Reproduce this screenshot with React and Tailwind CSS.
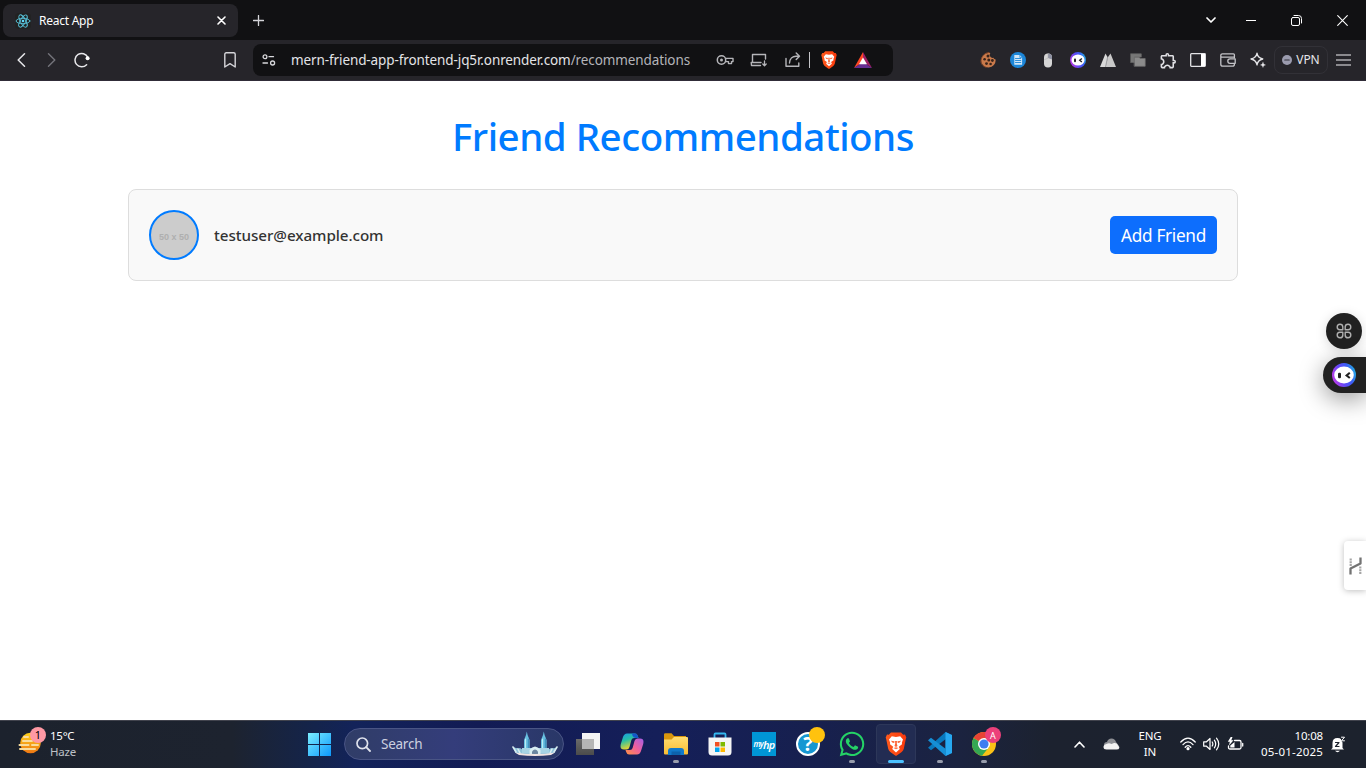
import React from "react";
import { MdOutlineExtension } from "react-icons/md";
import { FaWhatsapp } from "react-icons/fa";

const UI = "font-['Noto_Sans','Open_Sans',sans-serif]";

function Cell({ className = "w-[30px] h-[30px]", children }) {
  return <span className={`flex shrink-0 items-center justify-center ${className}`}>{children}</span>;
}

function Svg({ w = 16, h, vb, className = "", children }) {
  const hh = h ?? w;
  return (
    <svg width={w} height={hh} viewBox={vb ?? `0 0 ${w} ${hh}`} className={`shrink-0 ${className}`} fill="none" strokeLinecap="round" strokeLinejoin="round">
      {children}
    </svg>
  );
}

function ReactLogo() {
  return (
    <Svg w={16} className="rounded-sm bg-[#222222]">
      <g stroke="#58c4dc" strokeWidth="0.9">
        <ellipse cx="8" cy="8" rx="6.9" ry="2.7" />
        <ellipse cx="8" cy="8" rx="6.9" ry="2.7" transform="rotate(60 8 8)" />
        <ellipse cx="8" cy="8" rx="6.9" ry="2.7" transform="rotate(120 8 8)" />
      </g>
      <circle cx="8" cy="8" r="1.3" fill="#61dafb" />
    </Svg>
  );
}

function Brave({ size, id }) {
  return (
    <svg width={size} height={size} viewBox="0 0 24 24" className="shrink-0">
      <defs>
        <linearGradient id={id} x1="0" y1="0" x2="1" y2="0">
          <stop stopColor="#ff5a1c" />
          <stop offset="1" stopColor="#f9390d" />
        </linearGradient>
      </defs>
      <path d="M7 0.4H17L19.2 2.8L21 2.6L22.3 5.4L21.7 7.600L19.800 16.800Q19.300 18.800 17.700 20L12.800 23.500Q12 24 11.200 23.500L6.300 20Q4.700 18.800 4.200 16.800L2.300 7.600L1.700 5.400L3 2.600L4.800 2.800Z" fill={`url(#${id})`} />
      <path d="M7.800 4.200L12 4.900L16.200 4.200L19 7.600L17.900 10.500L18 12.300L14.800 14.700L15.800 17L12 20.400L8.200 17L9.200 14.700L6 12.300L6.100 10.500L5 7.600Z" fill="#fff" />
      <path d="M6.900 8.800L10.600 9.300L10.200 10.900L8.600 10.700ZM17.100 8.800L13.400 9.300L13.800 10.900L15.400 10.700ZM11.200 11.500L10.500 14L12 14.900L13.500 14L12.800 11.500L13 9H11Z" fill="#fb4a14" opacity=".85" />
      <path d="M9.400 16L12 15.300L14.600 16L12 17.300Z" fill="#fb4a14" opacity=".8" />
    </svg>
  );
}

function Robot({ size, id }) {
  return (
    <svg width={size} height={size} viewBox="0 0 24 24" className="shrink-0">
      <defs>
        <linearGradient id={id} x1="0.1" y1="0.7" x2="1" y2="0.4">
          <stop offset="0" stopColor="#b03ce8" />
          <stop offset="0.35" stopColor="#6248f5" />
          <stop offset="0.7" stopColor="#3c5cf5" />
          <stop offset="1" stopColor="#22a9e2" />
        </linearGradient>
      </defs>
      <circle cx="12" cy="12" r="12" fill={`url(#${id})`} />
      <ellipse cx="12" cy="12" rx="9.8" ry="8.4" fill="#fff" />
      <rect x="6" y="9.8" width="3" height="5.4" rx="1.2" fill="#222" />
      <path d="M17.800 9.800L14.600 12.500L17.800 15" fill="none" stroke="#222" strokeWidth="2.1" />
    </svg>
  );
}

function TabStrip() {
  return (
    <div className="flex h-10 shrink-0 items-stretch bg-[#111113] text-white">
      <div className="my-1 ml-[3px] flex h-[33px] w-[235px] items-center rounded-lg bg-[#26252a] pl-3">
        <ReactLogo />
        <span className="ml-2 flex-1 text-[12px] leading-4 tracking-[-0.25px]">React App</span>
        <Svg w={9} className="mr-3" vb="0 0 9 9">
          <path d="M1 1l7 7M8 1l-7 7" stroke="#fff" strokeWidth="1.6" />
        </Svg>
      </div>
      <Cell className="ml-[5px] h-10 w-[31px]">
        <Svg w={11}><path d="M5.5 .5v10M.5 5.5h10" stroke="#d4d4d8" strokeWidth="1.3" /></Svg>
      </Cell>
      <div className="flex-1" />
      <Cell className="h-10 w-[34px]">
        <Svg w={10} h={6}><path d="M1 1l4 4 4-4" stroke="#fff" strokeWidth="1.7" /></Svg>
      </Cell>
      <Cell className="h-10 w-[46px]">
        <Svg w={10} h={1}><path d="M0 0h10v1H0z" fill="#fff" /></Svg>
      </Cell>
      <Cell className="h-10 w-[46px] pr-px">
        <Svg w={11}>
          <rect x=".5" y="2.5" width="8" height="8" rx="1.5" stroke="#fff" />
          <path d="M3 .5h4.5a3 3 0 013 3V8" stroke="#fff" />
        </Svg>
      </Cell>
      <Cell className="h-10 w-[46px] pr-px">
        <Svg w={11}><path d="M.7 .7l9.6 9.6M10.3 .7L.7 10.3" stroke="#fff" strokeWidth="1.1" /></Svg>
      </Cell>
    </div>
  );
}

function AddressBar() {
  return (
    <div className="ml-2 flex h-8 w-[640px] shrink-0 items-center rounded-lg bg-[#111113] text-[#e4e4e7]">
      <Cell className="ml-[6px] h-5 w-5">
        <Svg w={14} h={12}>
          <circle cx="3" cy="2.7" r="1.9" stroke="#d8d8dc" strokeWidth="1.3" />
          <path d="M7 2.7h4.500M1 9h4.500" stroke="#d8d8dc" strokeWidth="1.3" />
          <circle cx="10.6" cy="9" r="2" stroke="#d8d8dc" strokeWidth="1.3" />
        </Svg>
      </Cell>
      <span className="ml-3 w-[419px] whitespace-nowrap text-[13.5px] leading-5 tracking-[-0.1px]">
        mern-friend-app-frontend-jq5r.onrender.com<span className="text-[#b4b4b9]">/recommendations</span>
      </span>
      <Cell className="ml-[5px] h-8 w-[20px]">
        <Svg w={18} h={12}>
          <circle cx="5.500" cy="6" r="4.200" stroke="#b5b5b9" strokeWidth="1.500" />
          <circle cx="5.500" cy="6" r="1.500" fill="#b5b5b9" />
          <path d="M9.700 4.400h7.300v3.200h-1.500v2h-3v-2H9.700" stroke="#b5b5b9" strokeWidth="1.400" />
        </Svg>
      </Cell>
      <Cell className="ml-[14px] h-8 w-[20px]">
        <Svg w={18} h={14}>
          <path d="M15.500 6V1.500H2.500V9.500M11 9.500H1.200L1.500 12.500H10.500" stroke="#b5b5b9" strokeWidth="1.400" />
          <path d="M14.500 8v4.600M12.800 11l1.700 1.800 1.700-1.800" stroke="#b5b5b9" strokeWidth="1.300" />
        </Svg>
      </Cell>
      <Cell className="ml-[14px] h-8 w-[20px]">
        <Svg w={16} h={16}>
          <path d="M1 6.500v7.800h12.800V11" stroke="#b5b5b9" strokeWidth="1.400" />
          <path d="M4.500 11c.2-4.200 3-6.800 6.500-6.800h3.500M11.200 1l3.300 3.200-3.300 3.400" stroke="#b5b5b9" strokeWidth="1.400" />
        </Svg>
      </Cell>
      <span className="ml-[6px] h-4 w-px bg-[#c5c5c9]" />
      <Cell className="ml-[9px] h-8 w-[20px]"><Brave size={18} id="braveBar" /></Cell>
      <Cell className="ml-[14px] h-8 w-[20px]">
        <Svg w={18} h={16}>
          <path d="M9 0L0 16L9 10Z" fill="#ff4724" />
          <path d="M9 0L18 16L9 10Z" fill="#9e1f63" />
          <path d="M0 16H18L9 10Z" fill="#662d91" />
          <path d="M9 5.4L13 12.3H5Z" fill="#fff" />
        </Svg>
      </Cell>
    </div>
  );
}

function Toolbar() {
  return (
    <div className="flex h-[41px] shrink-0 items-center border-b border-[#302c38] bg-[#26252a] px-[7px]">
      <Cell className="h-[30px] w-[30px] pr-px"><Svg w={9} h={14}><path d="M7.500 .8L1.200 7 7.500 13.200" stroke="#e8e8eb" strokeWidth="1.500" /></Svg></Cell>
      <Cell className="h-[30px] w-[30px] pr-px"><Svg w={9} h={14}><path d="M1.500 .8L7.800 7 1.500 13.200" stroke="#74747b" strokeWidth="1.400" /></Svg></Cell>
      <Cell>
        <Svg w={16}>
          <path d="M13.800 5.300A6.700 6.700 0 1 0 12.600 12.700" stroke="#e8e8eb" strokeWidth="1.500" />
          <circle cx="13.600" cy="6.200" r="2" fill="#fff" />
        </Svg>
      </Cell>
      <Cell className="ml-[118px] h-[30px] w-[30px]">
        <Svg w={12} h={16}><path d="M.8 2.300Q.8 .8 2.300 .8H9.700Q11.200 .8 11.200 2.300V15L6 11.700 .8 15Z" stroke="#d4d4d8" strokeWidth="1.400" /></Svg>
      </Cell>
      <AddressBar />
      <div className="flex-1" />
      <Cell>
        <Svg w={16}>
          <path d="M10.4 1a3 3 0 003 4.8c.5 1 1.400 1.600 2.200 1.700A7.300 7.300 0 118.900 1z" fill="#c97a4b" />
          <path d="M9.200.4C5 .8 2 3.500 1 8.500c-.5 3 2 6 5 6.800" stroke="#8b4a28" strokeWidth=".9" />
          <g fill="#38241b"><circle cx="8" cy="4" r="1.500" /><circle cx="4.600" cy="7.300" r="1.300" /><circle cx="8.800" cy="8" r="1.500" /><circle cx="12.400" cy="8.500" r="1.400" /><circle cx="6.500" cy="11.600" r="1.400" /><circle cx="10.600" cy="12" r="1.300" /></g>
        </Svg>
      </Cell>
      <Cell>
        <Svg w={16}>
          <circle cx="8" cy="8" r="8" fill="#1c86d8" />
          <path d="M4.300 3h5.500l2.300 2.500V12.800H4.300z" fill="#cfe6f8" />
          <path d="M5.500 6.500h5.300M5.500 8.500h5.300M5.500 10.500h5.300" stroke="#1c86d8" strokeWidth=".9" />
          <path d="M9.800 3v2.500h2.300" stroke="#1c86d8" strokeWidth=".7" />
        </Svg>
      </Cell>
      <Cell>
        <Svg w={10} h={15}>
          <rect x="1" y=".5" width="8" height="14" rx="4" fill="#d5d5d5" />
          <path d="M5 .5a4 4 0 014 4V6.600L5 5z" fill="#8e91a2" />
          <path d="M5 .5v4.600L1.200 6.800" stroke="#aaa" strokeWidth=".5" />
        </Svg>
      </Cell>
      <Cell><Robot size={16} id="robotSmall" /></Cell>
      <Cell>
        <Svg w={16} h={14}>
          <path d="M5.500 .5L8 5 6 14H0z" fill="#d9d9d9" /><path d="M10.500 .5L16 14H5.500L8 4z" fill="#c9c9c9" /><path d="M7.600 4L5.500 14" stroke="#88888c" strokeWidth=".7" />
        </Svg>
      </Cell>
      <Cell>
        <Svg w={16} h={14}>
          <path d="M.8 .8h10.500v3.300H4.500V9.500H.8z" fill="#777777" stroke="#656565" strokeWidth=".7" />
          <path d="M4.500 4.200H9l1.200 1.300h5V13.300H4.500z" fill="#8b8b8b" stroke="#6e6e6e" strokeWidth=".7" />
        </Svg>
      </Cell>
      <Cell><MdOutlineExtension size={19} color="#e0e0e4" /></Cell>
      <Cell><Svg w={16} h={14}><rect x=".7" y=".7" width="14.600" height="12.600" rx=".7" stroke="#e4e4e7" strokeWidth="1.300" /><path d="M11 1h4v12h-4z" fill="#fff" /></Svg></Cell>
      <Cell>
        <Svg w={16} h={14}>
          <path d="M14.400 4V1.800Q14.400.8 13.400.8H2.400A1.600 1.600 0 00.8 2.400V11.200Q.8 13.200 2.800 13.200H12.400Q14.400 13.200 14.400 11.200M.8 3.200Q1.200 4.200 2.400 4.200H14.400V4.800" stroke="#c4c4c8" strokeWidth="1.300" />
          <path d="M15.200 5.900H10A2.200 2.200 0 0010 10.300H15.200Z" stroke="#c4c4c8" strokeWidth="1.300" />
        </Svg>
      </Cell>
      <Cell>
        <Svg w={16}>
          <path d="M7 1.200C7.600 5 9 6.300 12.800 7 9 7.800 7.600 9.100 7 13 6.300 9.100 4.900 7.800 1 7 4.900 6.300 6.300 5 7 1.200Z" stroke="#e4e4e7" strokeWidth="1.300" />
          <path d="M13 9.500L13.800 12 16 13 13.800 13.800 13 16 12.100 13.800 10 13 12.100 12Z" fill="#e4e4e7" />
        </Svg>
      </Cell>
      <div className="ml-px flex h-7 w-[54px] items-center justify-center gap-[4px] rounded-lg border border-[#323137] text-[12px] tracking-[-0.1px] text-[#e7e7ea]">
        <Svg w={10}><circle cx="5" cy="5" r="5" fill="#9b9bae" /><path d="M2.800 5h4.400" stroke="#303038" strokeWidth="1.200" /></Svg>
        VPN
      </div>
      <Cell className="ml-px h-[30px] w-[30px] pr-px"><Svg w={15} h={12}><path d="M0 .5h15v1H0zM0 5.500h15v1H0zM0 10.500h15v1H0z" fill="#f0f0f2" /></Svg></Cell>
    </div>
  );
}

function Page() {
  return (
    <main className="relative flex flex-1 flex-col overflow-hidden bg-white px-32">
      <h1 className="mt-[31px] text-center text-[38.5px] font-medium leading-[48px] tracking-[-0.48px] text-[#007bff]">Friend Recommendations</h1>
      <div className="mt-[29px] flex h-[92px] items-center rounded-lg border border-[#dddddd] bg-[#f9f9f9] px-5">
        <div className="flex h-[50px] w-[50px] items-center justify-center rounded-full border-2 border-[#007bff] bg-[#cccccc] pt-[3px] font-['Liberation_Sans',sans-serif] text-[9px] font-bold leading-3 text-[#afafaf]">50 x 50</div>
        <span className="ml-[15px] flex-1 text-[15.2px] font-medium leading-6 tracking-[-0.06px] text-[#333333]">testuser@example.com</span>
        <button className="h-[38px] w-[107px] whitespace-nowrap rounded-[5px] bg-[#0d6efd] pt-px text-[17.2px] leading-6 tracking-[-0.3px] text-white">Add Friend</button>
      </div>
      <div className="absolute right-1 top-[232px] flex h-9 w-9 items-center justify-center rounded-full bg-[#212121] shadow-[0_2px_12px_rgba(0,0,0,0.15)]">
        <Svg w={16}>
          <path d="M6.800 6.800H3.900A2.800 2.800 0 116.800 3.900ZM9.200 6.800H12.100A2.800 2.800 0 109.200 3.900ZM6.800 9.200H3.900A2.800 2.800 0 106.800 12.100ZM9.200 9.200H12.100A2.800 2.800 0 119.200 12.100Z" stroke="#b0b0b0" strokeWidth="1.400" />
        </Svg>
      </div>
      <div className="absolute right-0 top-[276px] flex h-9 w-[43px] items-center rounded-l-full bg-[#212121] pl-[9px] shadow-[0_6px_24px_rgba(0,0,0,0.4)]">
        <Robot size={24} id="robotLarge" />
      </div>
      <div className="absolute right-0 top-[460px] flex h-[49px] w-[22px] items-center justify-center rounded-l bg-white shadow-[0_1px_6px_rgba(0,0,0,0.25)]">
        <Svg w={13} h={18}>
          <path d="M1.500 17.500V11.500L11.500 6.500V.5" stroke="#737373" strokeWidth="2.300" strokeLinecap="butt" />
          <path d="M1.700 9V1.500M11.300 9.500V17" stroke="#a5a5a5" strokeWidth="2.200" strokeDasharray="2 .8" strokeLinecap="butt" />
        </Svg>
      </div>
    </main>
  );
}

function TaskApp({ active, running, children }) {
  return (
    <div className={`relative mx-[2px] flex h-10 w-10 shrink-0 items-center justify-center rounded ${active ? "border border-[#2d3759] bg-[#222c52]" : ""}`}>
      {children}
      {running && <span className="absolute bottom-[1px] h-[3px] w-[6px] rounded-full bg-[#989dac]" />}
      {active && <span className="absolute bottom-0 h-[3px] w-4 rounded-full bg-[#4cc2ff]" />}
    </div>
  );
}

function Search() {
  return (
    <div className="mx-[2px] flex h-8 w-[220px] shrink-0 items-center rounded-full border border-[#4a5585] bg-linear-to-r from-[#303d67] via-[#343d7b] to-[#293767] pl-[11px] pr-[5px]">
      <Svg w={15}><circle cx="6.300" cy="6.300" r="5.300" stroke="#dfe2ec" strokeWidth="1.700" /><path d="M10.200 10.200L14 14" stroke="#dfe2ec" strokeWidth="1.800" /></Svg>
      <span className="ml-[10px] flex-1 text-[13.5px] leading-5 tracking-[-0.25px] text-[#cdd1e0]">Search</span>
      <Svg w={46} h={26}>
        <path d="M1 16q5 2 7 1l3 2h25l3-2q3 1 6-1l-2.500 6q-19.500 4-39 0z" fill="#8fc3da" />
        <path d="M1 16l3 5M6 18l2 4M45 16l-3 5M40 18l-2 4" stroke="#d8edf0" strokeWidth="1.600" />
        <path d="M12 20V9l2-5 .8-3.500L15.600 4l2 5v11zM29 20V9l2-5 .8-3.500L32.600 4l2 5v11z" fill="#67bfe0" />
        <path d="M13.500 19V8M30.500 19V8" stroke="#b9ecf5" strokeWidth="1.100" />
        <path d="M16.300 19V8M33.300 19V8" stroke="#3988b8" strokeWidth="1" />
        <path d="M10 17h27v5H10z" fill="#a6d3e4" />
        <path d="M17.500 23v-4q5.500-7 11 0v4z" fill="#d9edf2" />
        <path d="M20 23v-2.500q3-4 6 0V23z" fill="#6c86a0" />
        <path d="M3 21.500q20 3 40 0l-4 2.500q-16 2-32 0z" fill="#f1e4e2" />
      </Svg>
    </div>
  );
}

function Taskbar() {
  return (
    <footer className="flex h-12 shrink-0 items-center border-t border-[#41434d] bg-[linear-gradient(90deg,#1c222d_0%,#1d232f_17%,#14244b_23%,#13235a_26%,#121b54_35%,#151f59_48%,#17204e_60%,#1b2340_70%,#1c222f_77%,#1c222d_100%)] pb-px text-white">
      <div className="flex w-[298px] shrink-0 items-center pl-[18px]">
        <div className="relative -mt-1 h-7 w-7">
          <Svg w={28}>
            <defs><linearGradient id="sun" x1="0" y1="0" x2="0" y2="1"><stop stopColor="#ffd21a" /><stop offset="1" stopColor="#ee7714" /></linearGradient></defs>
            <circle cx="12.500" cy="15" r="10.300" fill="url(#sun)" />
            <path d="M6 9h4M5 13h9M17 13h3M1.500 17h9M14 17h6M2 21h15" stroke="#f9dc9c" strokeWidth="2" />
          </Svg>
          <span className="absolute -top-[1px] left-[12px] flex h-4 w-4 items-center justify-center rounded-full bg-[#ff99a4] text-[11px] leading-4 text-black">1</span>
        </div>
        <div className="ml-1 text-[11.5px] leading-4 tracking-[-0.25px]">
          <div>15°C</div>
          <div className="text-[#bdc0c6]">Haze</div>
        </div>
      </div>
      <Cell className="h-11 w-11">
        <Svg w={24}>
          <defs><linearGradient id="win" gradientUnits="userSpaceOnUse" x1="0" y1="0" x2="24" y2="24"><stop stopColor="#7df0ff" /><stop offset="1" stopColor="#0a96fc" /></linearGradient></defs>
          <path d="M0 1h11v11H0zM12 1h11v11H12zM0 13h11v11H0zM12 13h11v11H12z" fill="url(#win)" />
        </Svg>
      </Cell>
      <Search />
      <TaskApp>
        <Svg w={24} h={22}>
          <defs><linearGradient id="tvb" x1="0" y1="0" x2="0" y2="1"><stop stopColor="#6a6a6a" /><stop offset="1" stopColor="#4b4b4b" /></linearGradient></defs>
          <path d="M0 6h18v16H0z" fill="url(#tvb)" /><path d="M6 0h18v16H6z" fill="#f3f3f3" /><path d="M6 6h12v10H6z" fill="#b5b5b5" />
        </Svg>
      </TaskApp>
      <TaskApp>
        <Svg w={24} h={22}>
          <defs>
            <linearGradient id="cpA" x1="0" y1="0" x2=".4" y2="1"><stop stopColor="#1a9be8" /><stop offset=".45" stopColor="#27bfa5" /><stop offset="1" stopColor="#f5d428" /></linearGradient>
            <linearGradient id="cpB" x1="1" y1="0" x2="0" y2="1"><stop stopColor="#a45ee8" /><stop offset=".5" stopColor="#f0609a" /><stop offset="1" stopColor="#ff9440" /></linearGradient>
          </defs>
          <path d="M7 .5h8q2 0 2.800 2.400L18.500 5H14q-2 0-2.600 2L9.500 14q-.7 2.500-3 2.500H4Q-.5 16.500 .8 11L3 4Q4.200 .5 7 .5z" fill="url(#cpA)" />
          <path d="M12 .5h3q2 0 2.800 2.400L18.500 5H16q-2.500 0-3.400-2z" fill="#1456c9" />
          <path d="M17 21.500H9Q7 21.500 6.200 19L5.500 17H10q2 0 2.600-2L14.500 8q.7-2.500 3-2.500H20Q24.500 5.500 23.200 11L21 18Q19.800 21.500 17 21.500z" fill="url(#cpB)" />
        </Svg>
      </TaskApp>
      <TaskApp running>
        <Svg w={24} h={22}>
          <defs><linearGradient id="fold" x1="0" y1="0" x2="0" y2="1"><stop stopColor="#ffdc70" /><stop offset="1" stopColor="#f9bc32" /></linearGradient></defs>
          <path d="M0 1.500Q0 .3 1.200 .3H7.500L10 3H22v6H0z" fill="#d9960c" />
          <path d="M0 6.500H7.500L10 4H23Q24 4 24 5v15.500Q24 21.500 23 21.500H1Q0 21.500 0 20.500z" fill="url(#fold)" />
          <path d="M4 22V18Q4 15 7 15h10q3 0 3 3v4z" fill="#1179ca" /><path d="M7.500 18.500h9V22h-9z" fill="#0d62ac" />
        </Svg>
      </TaskApp>
      <TaskApp>
        <Svg w={24}>
          <path d="M6.500 6V2.500Q6.500 1.500 7.500 1.500h9Q17.500 1.500 17.500 2.500V6" stroke="#35b8ef" strokeWidth="1.800" />
          <path d="M0.500 5.500h23V20q0 3.500-3.500 3.500H4Q.5 23.500 .5 20z" fill="#f5f5f5" />
          <path d="M7 10h4.500v4.500H7z" fill="#f25022" /><path d="M12.500 10H17v4.500h-4.500z" fill="#7fba00" /><path d="M7 15.500h4.500V20H7z" fill="#00a4ef" /><path d="M12.500 15.500H17V20h-4.500z" fill="#ffb900" />
        </Svg>
      </TaskApp>
      <TaskApp>
        <div className="flex h-6 w-6 items-center justify-center bg-[#0096d6] font-semibold italic leading-none tracking-[-0.8px]"><span className="text-[8px]">my</span><span className="text-[11px]">hp</span></div>
      </TaskApp>
      <TaskApp>
        <span className="flex h-6 w-6 items-center justify-center rounded-full border-2 border-white bg-[#1697d2] text-[20px] font-bold leading-none">?</span>
        <span className="absolute right-[3px] top-[3px] h-4 w-4 rounded-full bg-[#ffc20e]" />
      </TaskApp>
      <TaskApp running><FaWhatsapp size={28} color="#25d366" /></TaskApp>
      <TaskApp active><Brave size={24} id="braveTask" /></TaskApp>
      <TaskApp running>
        <Svg w={24}>
          <path d="M17.500 0L24 3v18l-6.500 3V7.200L3 18.200 0 15.800z" fill="#0879be" />
          <path d="M17.500 24L0 8.200 3 5.800 17.500 16.800z" fill="#168fd5" />
          <path d="M17.500 0L24 3v18l-6.500 3z" fill="#27a9f1" />
        </Svg>
      </TaskApp>
      <TaskApp running>
        <Svg w={24}>
          <circle cx="12" cy="12" r="12" fill="#fbc116" />
          <path d="M12 12L1.600 6A12 12 0 0 0 10 23.850L17.200 15z" fill="#34a853" />
          <path d="M12 12L1.600 6A12 12 0 0 1 22.400 6H12z" fill="#e94335" />
          <circle cx="12" cy="12" r="6" fill="#fff" /><circle cx="12" cy="12" r="4.600" fill="#3f7df0" />
        </Svg>
        <span className="absolute right-[3px] top-[3px] flex h-4 w-4 items-center justify-center rounded-full bg-[#ec407a] text-[9px] leading-none">A</span>
      </TaskApp>
      <div className="flex-1" />
      <Cell className="h-11 w-8 pr-px"><Svg w={11} h={7}><path d="M1 6l4.500-4.800L10 6" stroke="#fff" strokeWidth="1.600" /></Svg></Cell>
      <Cell className="h-11 w-8 pr-px">
        <Svg w={17} h={12}>
          <path d="M1 7Q1 4 4 4Q5 .5 8.500 .5Q12 .5 13 4l3 4z" fill="#8e9095" />
          <path d="M3.500 11.500Q.5 11.500 .5 9 .5 6.500 3.500 6 6 4.500 8.500 6L11 5q3.500-.5 4 2.500 1.800 1 1.300 2.500Q16 11.500 13.500 11.500z" fill="#f2f2f2" />
        </Svg>
      </Cell>
      <div className="w-[44px] text-center text-[11.5px] leading-4 tracking-[-0.1px]"><div>ENG</div><div>IN</div></div>
      <Cell className="ml-[4px] h-11 w-6">
        <Svg w={16} h={14}><path d="M.8 5Q8-2.600 15.200 5M3 7.600Q8 2.300 13 7.600M5.200 10.200Q8 7 10.800 10.200" stroke="#fff" strokeWidth="1.300" /><circle cx="8" cy="11.700" r="1.600" fill="#fff" /></Svg>
      </Cell>
      <Cell className="h-11 w-6 pr-px">
        <Svg w={17} h={14}><path d="M.7 4.800H3.500L7 1.500V12.500L3.500 9.200H.7Z" stroke="#fff" strokeWidth="1.200" /><path d="M9.200 5Q10.500 7 9.200 9M11.400 3.200Q14 7 11.400 10.800M13.500 1.200Q18 7 13.500 12.800" stroke="#fff" strokeWidth="1.200" /></Svg>
      </Cell>
      <Cell className="h-11 w-6 pr-px">
        <Svg w={17} h={14}>
          <path d="M7.500 3.500H12.500Q14 3.500 14 5V10.500Q14 12 12.500 12H3Q1.500 12 1.500 10.500V9M15.700 6.500V9" stroke="#fff" strokeWidth="1.300" />
          <path d="M3.300 10.500V8.500L7.500 5v5.500z" fill="#fff" /><path d="M3.700 0L.8 4.800H2.800L2 8.500L6.500 3.300H4.300L5.500 0z" fill="#fff" />
        </Svg>
      </Cell>
      <div className="w-[75px] text-right text-[11.5px] leading-4"><div className="tracking-[-0.2px]">10:08</div><div className="tracking-[0.2px]">05-01-2025</div></div>
      <Cell className="ml-[6px] mr-[19px] h-11 w-[18px]">
        <Svg w={16} h={17}>
          <path d="M2.500 12V7Q2.500 2 7.500 2q5 0 5 5v5l1.500 1.500H1z" fill="#fff" /><path d="M5 14.800q2.500 2.700 5 0z" fill="#fff" />
          <path d="M5.500 6.500h3.500L5.500 10.500H9" stroke="#1c222d" strokeWidth="1.200" /><path d="M10 0h6v6h-4z" fill="#1c222d" /><path d="M11.500 1.200h3L11.500 4.800h3" stroke="#fff" strokeWidth="1" />
        </Svg>
      </Cell>
    </footer>
  );
}

export default function App() {
  return (
    <div className={`flex h-[768px] w-[1366px] flex-col overflow-hidden ${UI}`}>
      <TabStrip />
      <Toolbar />
      <Page />
      <Taskbar />
    </div>
  );
}
